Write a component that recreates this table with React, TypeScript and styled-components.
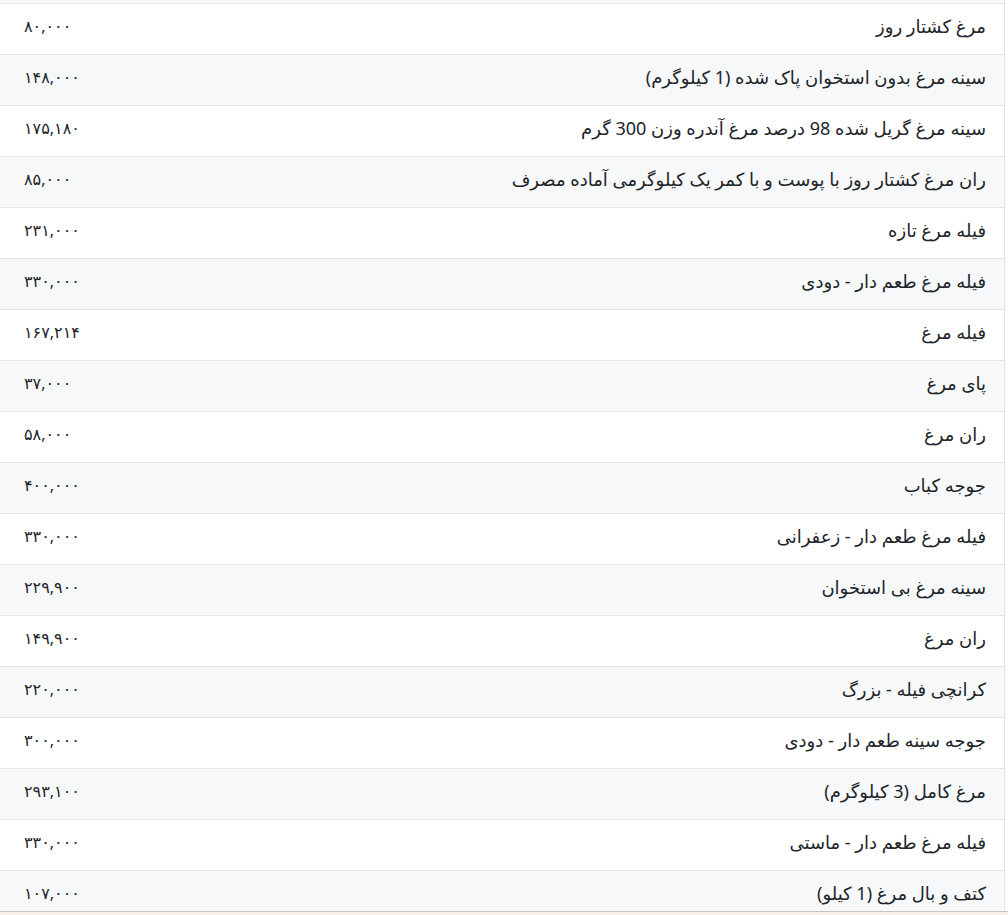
import styled, { createGlobalStyle } from 'styled-components';

const GlobalStyle = createGlobalStyle`
  html, body {
    margin: 0;
    padding: 0;
    background: #ffffff;
  }
  body {
    font-family: "Noto Sans", "DejaVu Sans", sans-serif;
    color: #212529;
  }
`;

const Page = styled.div`
  width: 1008px;
  direction: rtl;
`;

const Table = styled.div`
  width: 1005px;
  border-right: 1px solid #e3e6ea;
  box-sizing: border-box;
  margin-left: auto;
  margin-right: 3px;
`;

const TopSliver = styled.div`
  height: 3px;
  background: #f7f8fa;
  border-bottom: 1px solid #e3e6ea;
`;

const Row = styled.div<{ $striped: boolean }>`
  display: flex;
  align-items: center;
  height: 50px;
  border-bottom: 1px solid #e3e6ea;
  background: ${(p) => (p.$striped ? '#f7f8fa' : '#ffffff')};
`;

const NameCell = styled.div`
  flex: 1;
  padding-right: 18px;
  padding-bottom: 6px;
  font-size: 18px;
  text-align: right;
  white-space: nowrap;
`;

const PriceCell = styled.div`
  width: 140px;
  padding-left: 24px;
  padding-bottom: 6px;
  box-sizing: border-box;
  font-size: 16px;
  direction: ltr;
  text-align: left;
`;

const FooterBar = styled.div`
  position: fixed;
  left: 0;
  right: 0;
  bottom: 0;
  height: 3px;
  background: #f8efe9;
  border-top: 1px solid #c9c4c0;
`;

const products: [string, string][] = [
  ['مرغ کشتار روز', '۸۰,۰۰۰'],
  ['سینه مرغ بدون استخوان پاک شده (1 کیلوگرم)', '۱۴۸,۰۰۰'],
  ['سینه مرغ گریل شده 98 درصد مرغ آندره وزن 300 گرم', '۱۷۵,۱۸۰'],
  ['ران مرغ کشتار روز با پوست و با کمر یک کیلوگرمی آماده مصرف', '۸۵,۰۰۰'],
  ['فیله مرغ تازه', '۲۳۱,۰۰۰'],
  ['فیله مرغ طعم دار - دودی', '۳۳۰,۰۰۰'],
  ['فیله مرغ', '۱۶۷,۲۱۴'],
  ['پای مرغ', '۳۷,۰۰۰'],
  ['ران مرغ', '۵۸,۰۰۰'],
  ['جوجه کباب', '۴۰۰,۰۰۰'],
  ['فیله مرغ طعم دار - زعفرانی', '۳۳۰,۰۰۰'],
  ['سینه مرغ بی استخوان', '۲۲۹,۹۰۰'],
  ['ران مرغ', '۱۴۹,۹۰۰'],
  ['کرانچی فیله - بزرگ', '۲۲۰,۰۰۰'],
  ['جوجه سینه طعم دار - دودی', '۳۰۰,۰۰۰'],
  ['مرغ کامل (3 کیلوگرم)', '۲۹۳,۱۰۰'],
  ['فیله مرغ طعم دار - ماستی', '۳۳۰,۰۰۰'],
  ['کتف و بال مرغ (1 کیلو)', '۱۰۷,۰۰۰'],
];

export default function App() {
  return (
    <>
      <GlobalStyle />
      <Page>
        <Table>
          <TopSliver />
          {products.map(([name, price], i) => (
            <Row key={i} $striped={i % 2 === 1}>
              <NameCell>{name}</NameCell>
              <PriceCell>{price}</PriceCell>
            </Row>
          ))}
        </Table>
      </Page>
      <FooterBar />
    </>
  );
}
